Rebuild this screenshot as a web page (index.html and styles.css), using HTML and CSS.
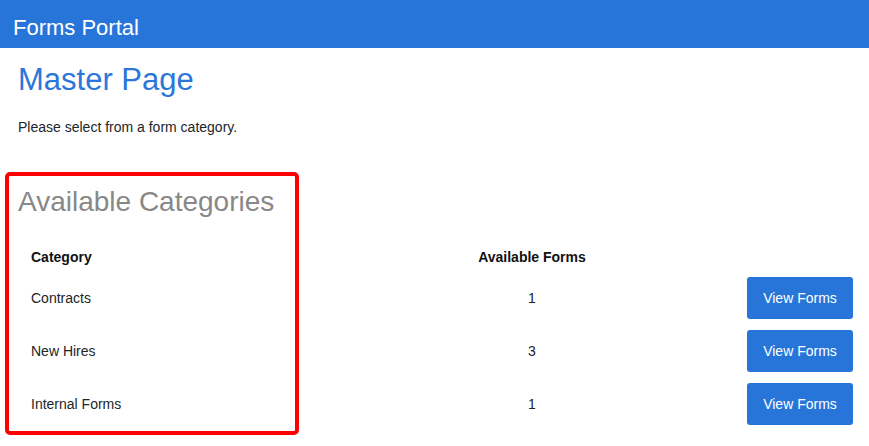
FILE: index.html
```html
<!DOCTYPE html>
<html lang="en">
<head>
<meta charset="utf-8">
<title>Forms Portal</title>
<link rel="stylesheet" href="styles.css">
</head>
<body>
<header class="topbar">
  <span class="brand">Forms Portal</span>
</header>
<main class="content">
  <h1 class="page-title">Master Page</h1>
  <p class="intro">Please select from a form category.</p>
  <h2 class="section-title">Available Categories</h2>
  <div class="cat-table">
    <div class="cell head">Category</div>
    <div class="cell head center">Available Forms</div>
    <div class="cell head"></div>

    <div class="cell">Contracts</div>
    <div class="cell center">1</div>
    <div class="cell right"><button class="btn">View Forms</button></div>

    <div class="cell">New Hires</div>
    <div class="cell center">3</div>
    <div class="cell right"><button class="btn">View Forms</button></div>

    <div class="cell">Internal Forms</div>
    <div class="cell center">1</div>
    <div class="cell right"><button class="btn">View Forms</button></div>
  </div>
</main>
<div class="highlight"></div>
</body>
</html>
```

FILE: styles.css
```css
html, body {
  margin: 0;
  padding: 0;
  background: #ffffff;
}
body {
  font-family: "Liberation Sans", Arial, sans-serif;
  color: #212529;
  font-size: 14px;
  line-height: 20px;
  position: relative;
  width: 869px;
  height: 446px;
  overflow: hidden;
}
.topbar {
  height: 48px;
  background: #2775d9;
  display: flex;
  align-items: center;
  padding-left: 13px;
}
.brand {
  color: #ffffff;
  font-size: 22px;
  line-height: 26px;
  padding-top: 8px;
}
.content {
  padding: 0 16px 0 18px;
}
.page-title {
  margin: 13px 0 0;
  font-size: 31px;
  line-height: 37px;
  font-weight: normal;
  color: #2b77d9;
}
.intro {
  margin: 19px 0 0;
  font-size: 14px;
  line-height: 20px;
  color: #212529;
}
.section-title {
  margin: 48px 0 0;
  font-size: 28px;
  line-height: 34px;
  font-weight: normal;
  color: #888888;
}
.cat-table {
  margin-top: 23px;
  display: grid;
  grid-template-columns: 440px 148px 1fr;
  grid-template-rows: 29px 53px 53px 53px;
}
.cell {
  display: flex;
  align-items: center;
  padding-left: 13px;
  color: #212529;
}
.cell.head {
  font-weight: bold;
  color: #111111;
}
.cell.center {
  justify-content: center;
  padding-left: 0;
}
.cell.right {
  justify-content: flex-end;
  padding-left: 0;
}
.btn {
  width: 106px;
  height: 42px;
  border: none;
  border-radius: 3px;
  background: #2775d9;
  color: #ffffff;
  font-family: "Liberation Sans", Arial, sans-serif;
  font-size: 14px;
  padding: 0;
}
.highlight {
  position: absolute;
  left: 5px;
  top: 172px;
  width: 286px;
  height: 255px;
  border: 4px solid #ff0000;
  border-radius: 5px;
  pointer-events: none;
}
```
